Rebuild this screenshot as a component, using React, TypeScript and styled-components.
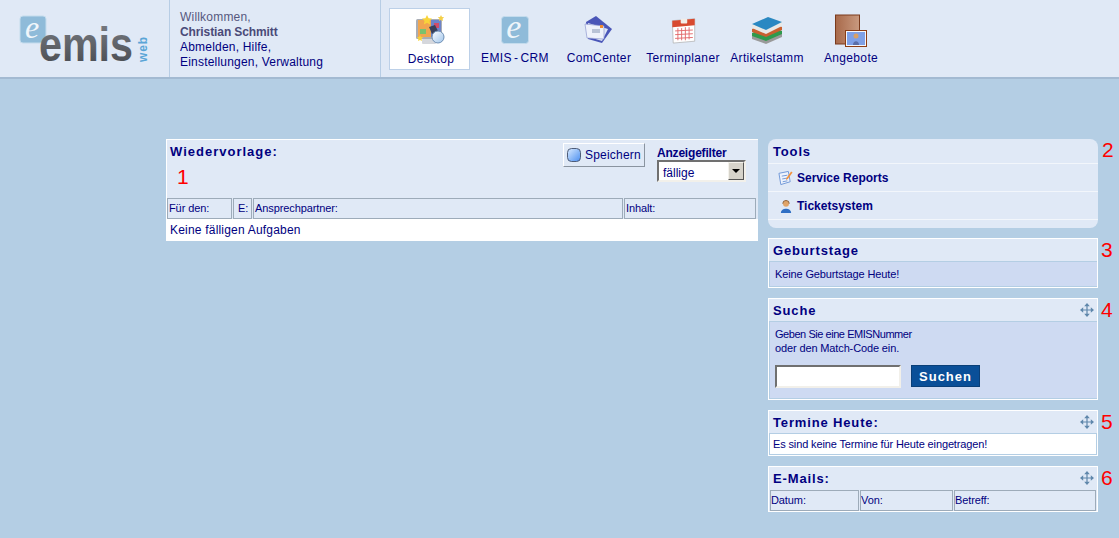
import React from 'react';
import styled, { createGlobalStyle } from 'styled-components';

const GlobalStyle = createGlobalStyle`
  html, body {
    margin: 0;
    padding: 0;
    background: #b4cee4;
    font-family: "Liberation Sans", Arial, sans-serif;
    color: #000080;
  }
`;

const Page = styled.div`
  width: 1119px;
  height: 538px;
  overflow: hidden;
`;

const Header = styled.header`
  display: flex;
  height: 77px;
  background: #e0e9f6;
  border-bottom: 2px solid #a3bad2;
`;

const LogoCell = styled.div`
  width: 169px;
  border-right: 1px solid #b7cde5;
  flex: none;
`;

const WelcomeCell = styled.div`
  width: 200px;
  flex: none;
  padding: 10px 0 0 10px;
  border-right: 1px solid #b7cde5;
  font-size: 12px;
  line-height: 15px;
  letter-spacing: 0.2px;
`;

const Muted = styled.div`
  color: #56587e;
`;

const UserName = styled.div`
  color: #4a4a78;
  font-weight: bold;
  letter-spacing: -0.1px;
`;

const Nav = styled.nav`
  display: flex;
  padding: 8px 0 0 8px;
`;

const NavItem = styled.div<{ $active?: boolean }>`
  box-sizing: border-box;
  display: flex;
  flex-direction: column;
  align-items: center;
  height: 62px;
  width: ${({ $active }) => ($active ? '81px' : '84px')};
  margin-right: ${({ $active }) => ($active ? '3px' : '0')};
  background: ${({ $active }) => ($active ? '#fff' : 'transparent')};
  border: 1px solid ${({ $active }) => ($active ? '#bcd0e8' : 'transparent')};
  font-size: 12px;
  letter-spacing: 0.35px;
  word-spacing: -1.5px;
  white-space: nowrap;
`;

const NavIcon = styled.div`
  height: 36px;
  margin-top: 3px;
  display: flex;
  align-items: center;
  justify-content: center;
`;

const NavLabel = styled.span<{ $active?: boolean }>`
  margin-top: ${({ $active }) => ($active ? '4px' : '3px')};
  line-height: 14px;
  padding-left: ${({ $active }) => ($active ? '3px' : '0')};
`;

const Main = styled.main`
  display: flex;
  align-items: flex-start;
  gap: 10px;
  padding: 60px 0 0 166px;
`;

const LeftPanel = styled.section`
  box-sizing: border-box;
  width: 592px;
  background: #e0e9f6;
  border-top: 1px solid #fff;
  border-left: 1px solid #fff;
`;

const LeftTop = styled.div`
  display: flex;
  justify-content: space-between;
  height: 57px;
  padding-right: 12px;
`;

const TitleBlock = styled.div`
  padding: 4px 0 0 3px;
`;

const Title = styled.h2`
  margin: 0;
  font-size: 13px;
  line-height: 16px;
  font-weight: bold;
  letter-spacing: 1px;
  color: #000080;
`;

const RedNumber = styled.span`
  display: block;
  margin: 5px 0 0 7px;
  font-size: 21px;
  line-height: 24px;
  color: #f00;
`;

const Controls = styled.div`
  display: flex;
  gap: 12px;
  padding-top: 3px;
`;

const SaveButton = styled.button`
  box-sizing: border-box;
  display: flex;
  align-items: center;
  gap: 3px;
  width: 82px;
  height: 24px;
  padding: 0 0 0 2px;
  background: #e0e9f6;
  border: 1px solid;
  border-color: #fff #8a94a0 #8a94a0 #fff;
  color: #000080;
  font: 12px "Liberation Sans", Arial, sans-serif;
  letter-spacing: 0.2px;
`;

const FilterBlock = styled.div`
  width: 89px;
  padding-top: 4px;
`;

const FilterLabel = styled.div`
  font-size: 12px;
  line-height: 13px;
  font-weight: bold;
  letter-spacing: -0.2px;
`;

const SelectBox = styled.div`
  box-sizing: border-box;
  display: flex;
  justify-content: space-between;
  align-items: center;
  height: 22px;
  background: #fff;
  border: 2px solid;
  border-color: #707070 #f2f0ea #f2f0ea #707070;
  padding-left: 4px;
  font-size: 12px;
`;

const SelectText = styled.span`
  padding-top: 3px;
`;

const SelectArrow = styled.span`
  box-sizing: border-box;
  display: flex;
  align-items: center;
  justify-content: center;
  width: 16px;
  height: 18px;
  background: #d6d3ca;
  border: 1px solid;
  border-color: #f4f2ec #555 #555 #f4f2ec;

  &::after {
    content: '';
    border-style: solid;
    border-width: 4px 4px 0;
    border-color: #000 transparent transparent;
  }
`;

const HeadRow = styled.div<{ $columns: string }>`
  display: grid;
  grid-template-columns: ${({ $columns }) => $columns};
  gap: 1px;
  padding-top: 1px;
`;

const HeadCell = styled.div<{ $center?: boolean }>`
  box-sizing: border-box;
  height: 21px;
  padding-left: 1px;
  border: 1px solid #9dabb9;
  font-size: 11px;
  line-height: 19px;
  letter-spacing: -0.1px;
  text-align: ${({ $center }) => ($center ? 'center' : 'left')};
  white-space: nowrap;
  overflow: hidden;
`;

const MailCell = styled(HeadCell)`
  padding-left: 0;
`;

const EmptyRow = styled.div`
  height: 22px;
  padding-left: 3px;
  background: #fff;
  font-size: 12px;
  line-height: 22px;
  letter-spacing: 0.2px;
`;

const RightColumn = styled.aside`
  display: flex;
  flex-direction: column;
  gap: 10px;
  width: 330px;
`;

const Box = styled.section<{ $height: number }>`
  box-sizing: border-box;
  position: relative;
  height: ${({ $height }) => $height}px;
  background: #e0e9f6;
  border: 1px solid #fff;
`;

const ToolsBox = styled.section`
  position: relative;
  height: 89px;
  background: #e0e9f6;
  border-radius: 8px;
`;

const Badge = styled.span`
  position: absolute;
  left: 100%;
  top: -1px;
  margin-left: 4px;
  font-size: 21px;
  line-height: 24px;
  color: #f00;
`;

const BoxHead = styled.div`
  display: flex;
  justify-content: space-between;
  align-items: center;
  box-sizing: border-box;
  height: 22px;
  padding: 0 3px 0 4px;
  font-size: 13px;
  font-weight: bold;
  letter-spacing: 0.85px;
`;

const ToolsHead = styled(BoxHead)`
  height: 25px;
  padding: 0 3px 0 5px;
  border-bottom: 1px solid #f2f6fb;
`;

const ToolRow = styled.div`
  box-sizing: border-box;
  display: flex;
  align-items: center;
  height: 28px;
  padding: 1px 0 0 10px;
  gap: 4px;
  border-bottom: 1px solid #f2f6fb;
  font-size: 12px;
  font-weight: bold;
`;

const ToolIcon = styled.span`
  display: flex;
  justify-content: center;
  width: 15px;
`;

const BlueBody = styled.div`
  box-sizing: border-box;
  background: #cedaf2;
  border: 1px solid #b4cee4;
  border-right: none;
  padding-left: 5px;
  font-size: 11px;
  letter-spacing: -0.13px;
`;

const BirthdayBody = styled(BlueBody)`
  height: 26px;
  line-height: 24px;
`;

const SearchBody = styled(BlueBody)`
  height: 78px;
  padding-top: 5px;
  line-height: 14px;
`;

const Tight = styled.span`
  letter-spacing: -0.45px;
`;

const SearchRow = styled.div`
  display: flex;
  gap: 10px;
  margin-top: 10px;
`;

const SearchInput = styled.input`
  box-sizing: border-box;
  width: 126px;
  height: 23px;
  margin: 0;
  padding: 0;
  background: #fff;
  border: 2px solid;
  border-color: #707070 #f2f0ea #f2f0ea #707070;
`;

const SearchButton = styled.button`
  box-sizing: border-box;
  width: 69px;
  height: 22px;
  padding: 0;
  background: #0a4f98;
  border: 1px solid #0a3f78;
  color: #fff;
  font: bold 13px "Liberation Sans", Arial, sans-serif;
  letter-spacing: 1px;
`;

const WhiteBody = styled.div`
  box-sizing: border-box;
  height: 22px;
  padding-left: 3px;
  background: #fff;
  border: 1px solid #b4cee4;
  font-size: 11px;
  line-height: 20px;
  letter-spacing: -0.13px;
`;

const MailHead = styled(HeadRow)`
  padding: 1px 1px 0;
`;

const MoveSvg = styled.svg`
  margin-bottom: 1px;
`;

const MoveIcon = () => (
  <MoveSvg width="14" height="14" viewBox="0 0 14 14">
    <path d="M7 2v10M2 7h10" stroke="#5f87ab" strokeWidth="1.2" fill="none" />
    <path d="M7 0l2.800 3.200h-5.600zM7 14l2.800-3.200h-5.600zM0 7l3.200-2.800v5.600zM14 7l-3.200-2.800v5.600z" fill="#5f87ab" />
  </MoveSvg>
);

const Logo = () => (
  <svg width="169" height="77" viewBox="0 0 169 77">
    <defs>
      <linearGradient id="emisText" x1="0" y1="0" x2="0" y2="1">
        <stop offset="0" stopColor="#7d8086" />
        <stop offset="1" stopColor="#44474d" />
      </linearGradient>
    </defs>
    <rect x="20" y="16" width="26" height="27" rx="3" fill="#8fbbd9" stroke="#c4dced" />
    <text x="32" y="38" textAnchor="middle" fontFamily="Liberation Serif, serif" fontStyle="italic" fontSize="32" fill="#f0f6fb">e</text>
    <text x="39" y="61" fontFamily="Liberation Sans, sans-serif" fontWeight="bold" fontSize="48" fill="url(#emisText)" textLength="94" lengthAdjust="spacingAndGlyphs">emis</text>
    <text transform="translate(147 62) rotate(-90)" fontFamily="Liberation Sans, sans-serif" fontWeight="bold" fontSize="12" fill="#5aa5d6" textLength="25">web</text>
  </svg>
);

const DesktopIcon = () => (
  <svg width="32" height="32" viewBox="0 0 32 32">
    <defs>
      <linearGradient id="lens" x1="0" y1="0" x2="1" y2="1">
        <stop offset="0" stopColor="#fff" />
        <stop offset="1" stopColor="#9fc4ea" />
      </linearGradient>
    </defs>
    <rect x="2" y="5" width="26" height="20" rx="1.500" fill="#a9adb5" />
    <rect x="4" y="6" width="14" height="17" fill="#f0a650" />
    <rect x="17" y="6" width="10" height="17" fill="#6d83c9" />
    <rect x="6" y="15" width="6" height="5" fill="#7cc26d" />
    <rect x="20" y="9" width="5" height="5" fill="#d14c6a" />
    <rect x="8" y="25" width="14" height="5" rx="1" fill="#d5d7dc" />
    <path d="M13 1l1.600 3.200 3.400.4-2.500 2.400.6 3.400-3.100-1.700-3.100 1.700.6-3.400L8 4.600l3.400-.4z" fill="#f8d43a" />
    <path d="M27 1l1 2 2.200.3-1.600 1.500.4 2.200-2-1-2 1 .4-2.200-1.600-1.500 2.200-.3z" fill="#f4cf48" />
    <path d="M6 21l1 2 2.200.3-1.600 1.500.4 2.200-2-1-2 1 .4-2.200-1.600-1.500 2.200-.3z" fill="#f8d43a" />
    <path d="M15 13l6-2 3 6-6 3z" fill="#39405a" />
    <circle cx="24" cy="23" r="6" fill="url(#lens)" stroke="#6f8fb4" />
  </svg>
);

const EmisIcon = () => (
  <svg width="28" height="28" viewBox="0 0 28 28" overflow="visible">
    <rect x="0.500" y="0.500" width="27" height="27" rx="3" fill="#8fbbd9" stroke="#c4dced" />
    <text x="13" y="22" textAnchor="middle" fontFamily="Liberation Serif, serif" fontStyle="italic" fontSize="34" fill="#eef5fa">e</text>
  </svg>
);

const MailIcon = () => (
  <svg width="30" height="30" viewBox="0 0 30 30">
    <path d="M2 7L12 1l16 13-10 14-14-4z" fill="#4a56b8" />
    <path d="M4 8l20 6-6 12L5 22z" fill="#dfe6f6" />
    <path d="M1 9l19 2v13L3 23z" fill="#eef2fb" stroke="#8f9ad0" strokeWidth="0.7" />
    <rect x="8" y="14" width="8" height="4" fill="#b9c3d6" />
    <rect x="16" y="10" width="3" height="3" fill="#f08a30" />
  </svg>
);

const CalendarIcon = () => (
  <svg width="25" height="28" viewBox="0 0 26 30">
    <path d="M1 5l24-2v24L2 29z" fill="#fff" stroke="#a8a8a8" strokeWidth="0.7" />
    <path d="M1 5l24-2v7L1 12z" fill="#d84a30" />
    <rect x="10" y="3" width="7" height="5" rx="1" fill="#f2ece6" />
    <path d="M7 13v13M11 13v13M15 12v14M19 12v13M4 16l19-1M4 20l19-1M4 24l19-1" stroke="#e2686a" strokeWidth="1" fill="none" />
  </svg>
);

const BooksIcon = () => (
  <svg width="32" height="27" viewBox="0 0 32 27">
    <path d="M1 19l17-7 13 5v3L15 27 1 22z" fill="#9a9a9a" />
    <path d="M1 16l17-7 13 5v3L15 24 1 19z" fill="#2f9a4c" />
    <path d="M1 12l17-7 13 5v3L15 20 1 15z" fill="#c9602f" />
    <path d="M1 8l16-8 14 5v4L15 17 1 11z" fill="#e9e9e6" />
    <path d="M1 7l16-7 14 5-16 8z" fill="#2a88c2" />
  </svg>
);

const OfferIcon = () => (
  <svg width="32" height="33" viewBox="0 0 32 33">
    <defs>
      <linearGradient id="brown" x1="0" y1="0" x2="1" y2="0">
        <stop offset="0" stopColor="#a8694a" />
        <stop offset="1" stopColor="#c99a80" />
      </linearGradient>
    </defs>
    <rect x="0.500" y="1" width="24" height="29" fill="url(#brown)" stroke="#7a3a1c" />
    <rect x="10.500" y="16.500" width="21" height="16" fill="#f4f6fb" stroke="#8c3d14" />
    <rect x="12" y="18" width="18" height="13" fill="#7ea0e6" />
    <circle cx="21" cy="22" r="2.500" fill="#d9a066" />
    <path d="M18 31c0-5 6-5 6 0z" fill="#5a6ea8" />
  </svg>
);

const SaveIcon = () => (
  <svg width="16" height="16" viewBox="0 0 16 16">
    <defs>
      <linearGradient id="saveBlue" x1="0" y1="0" x2="1" y2="1">
        <stop offset="0" stopColor="#d8eaff" />
        <stop offset="1" stopColor="#4a8ef0" />
      </linearGradient>
    </defs>
    <rect x="1.500" y="1.500" width="13" height="13" rx="4" fill="url(#saveBlue)" stroke="#4f5d78" />
  </svg>
);

const ReportIcon = () => (
  <svg width="16" height="16" viewBox="0 0 16 16">
    <path d="M1 3l10-2 2 11-10 3z" fill="#eef3fc" stroke="#6d95d6" />
    <path d="M4 6l6-1M4.500 9l6-1M5 12l5-1" stroke="#6d95d6" fill="none" />
    <path d="M9 8l5-7 1.500 1-5 7-2 1z" fill="#f2913a" />
  </svg>
);

const AgentIcon = () => (
  <svg width="12" height="13" viewBox="0 0 12 14">
    <circle cx="6" cy="4" r="3.200" fill="#e0a468" />
    <path d="M2.500 4a3.500 3.500 0 0 1 7 0" stroke="#8a5a2a" fill="none" />
    <path d="M0.500 14c0-6 11-6 11 0z" fill="#2f6fc4" />
  </svg>
);

const navItems = [
  { label: 'Desktop', icon: <DesktopIcon />, active: true },
  { label: 'EMIS - CRM', icon: <EmisIcon /> },
  { label: 'ComCenter', icon: <MailIcon /> },
  { label: 'Terminplaner', icon: <CalendarIcon /> },
  { label: 'Artikelstamm', icon: <BooksIcon /> },
  { label: 'Angebote', icon: <OfferIcon /> },
];

export default function App() {
  return (
    <Page>
      <GlobalStyle />
      <Header>
        <LogoCell>
          <Logo />
        </LogoCell>
        <WelcomeCell>
          <Muted>Willkommen,</Muted>
          <UserName>Christian Schmitt</UserName>
          <div>Abmelden, Hilfe,</div>
          <div>Einstellungen, Verwaltung</div>
        </WelcomeCell>
        <Nav>
          {navItems.map((item) => (
            <NavItem key={item.label} $active={item.active}>
              <NavIcon>{item.icon}</NavIcon>
              <NavLabel $active={item.active}>{item.label}</NavLabel>
            </NavItem>
          ))}
        </Nav>
      </Header>
      <Main>
        <LeftPanel>
          <LeftTop>
            <TitleBlock>
              <Title>Wiedervorlage:</Title>
              <RedNumber>1</RedNumber>
            </TitleBlock>
            <Controls>
              <SaveButton>
                <SaveIcon />
                Speichern
              </SaveButton>
              <FilterBlock>
                <FilterLabel>Anzeigefilter</FilterLabel>
                <SelectBox>
                  <SelectText>fällige</SelectText>
                  <SelectArrow />
                </SelectBox>
              </FilterBlock>
            </Controls>
          </LeftTop>
          <HeadRow $columns="65px 19px 370px 132px">
            <HeadCell>Für den:</HeadCell>
            <HeadCell $center>E:</HeadCell>
            <HeadCell>Ansprechpartner:</HeadCell>
            <HeadCell>Inhalt:</HeadCell>
          </HeadRow>
          <EmptyRow>Keine fälligen Aufgaben</EmptyRow>
        </LeftPanel>
        <RightColumn>
          <ToolsBox>
            <Badge>2</Badge>
            <ToolsHead>Tools</ToolsHead>
            <ToolRow>
              <ToolIcon><ReportIcon /></ToolIcon>
              Service Reports
            </ToolRow>
            <ToolRow>
              <ToolIcon><AgentIcon /></ToolIcon>
              Ticketsystem
            </ToolRow>
          </ToolsBox>
          <Box $height={50}>
            <Badge>3</Badge>
            <BoxHead>Geburtstage</BoxHead>
            <BirthdayBody>Keine Geburtstage Heute!</BirthdayBody>
          </Box>
          <Box $height={102}>
            <Badge>4</Badge>
            <BoxHead>Suche <MoveIcon /></BoxHead>
            <SearchBody>
              <Tight>Geben Sie eine EMISNummer</Tight>
              <br />
              oder den Match-Code ein.
              <SearchRow>
                <SearchInput />
                <SearchButton>Suchen</SearchButton>
              </SearchRow>
            </SearchBody>
          </Box>
          <Box $height={46}>
            <Badge>5</Badge>
            <BoxHead>Termine Heute: <MoveIcon /></BoxHead>
            <WhiteBody>Es sind keine Termine für Heute eingetragen!</WhiteBody>
          </Box>
          <Box $height={46}>
            <Badge>6</Badge>
            <BoxHead>E-Mails: <MoveIcon /></BoxHead>
            <MailHead $columns="89px 93px 142px">
              <MailCell>Datum:</MailCell>
              <MailCell>Von:</MailCell>
              <MailCell>Betreff:</MailCell>
            </MailHead>
          </Box>
        </RightColumn>
      </Main>
    </Page>
  );
}
